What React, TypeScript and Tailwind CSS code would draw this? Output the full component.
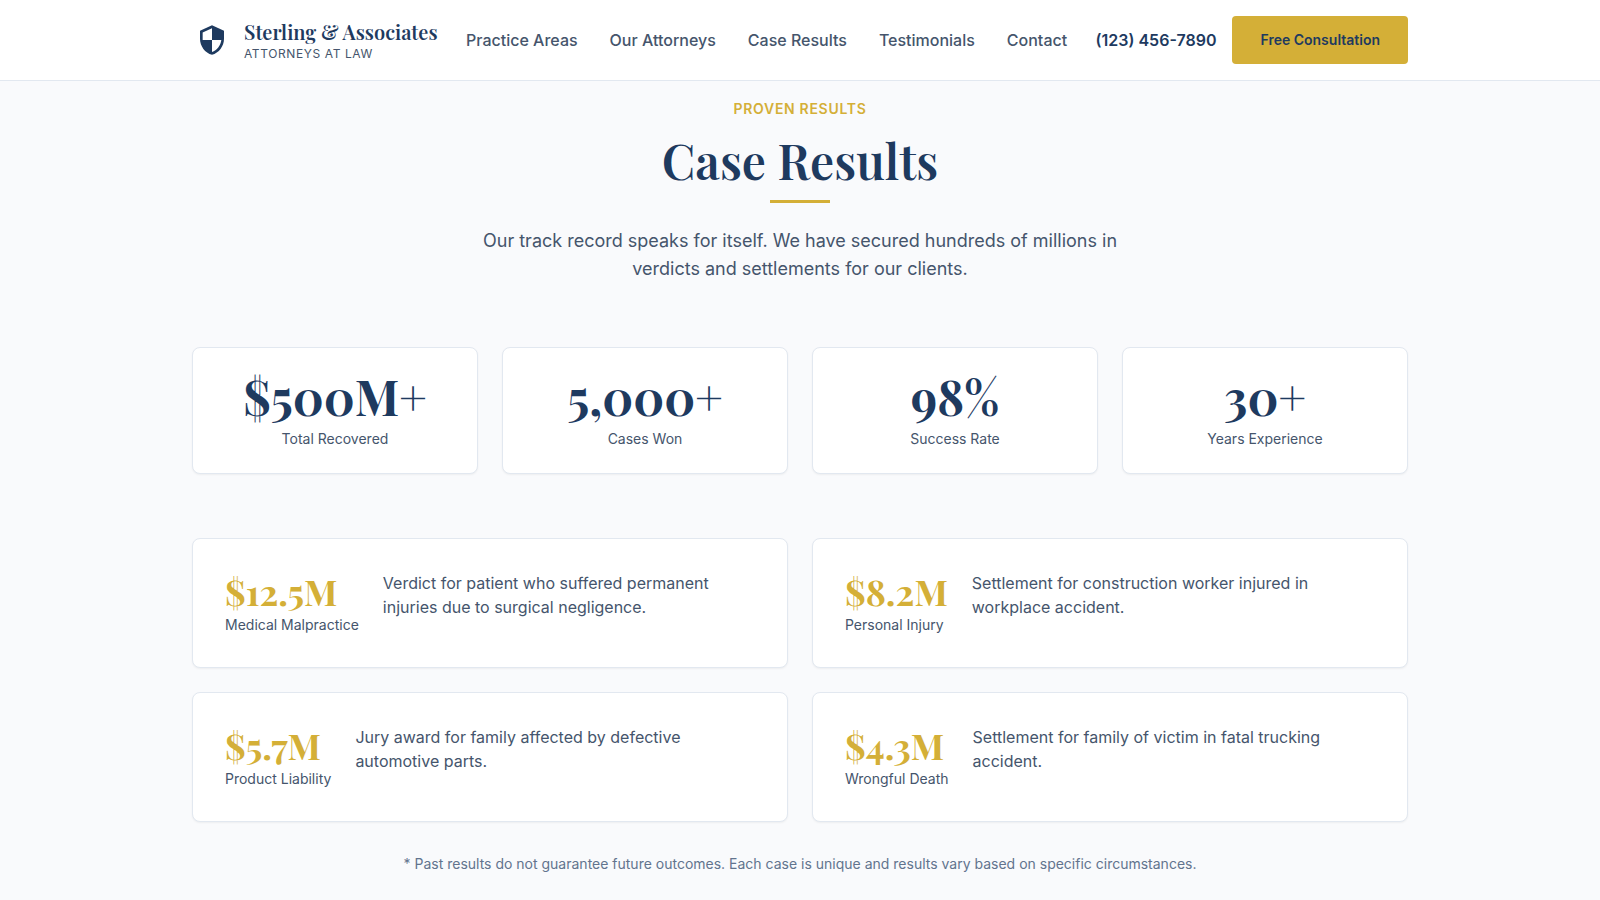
/** Landing page for the firm: sticky header plus the case results section. */

const SERIF = "font-['Playfair_Display','Liberation_Serif',serif]";

const NAV = [
  { label: 'Practice Areas', href: '#practice-areas' },
  { label: 'Our Attorneys', href: '#attorneys' },
  { label: 'Case Results', href: '#results' },
  { label: 'Testimonials', href: '#testimonials' },
  { label: 'Contact', href: '#contact' },
];

const STATS = [
  { value: '$500M+', label: 'Total Recovered' },
  { value: '5,000+', label: 'Cases Won' },
  { value: '98%', label: 'Success Rate' },
  { value: '30+', label: 'Years Experience' },
];

const RESULTS = [
  {
    amount: '$12.5M',
    area: 'Medical Malpractice',
    text: 'Verdict for patient who suffered permanent injuries due to surgical negligence.',
  },
  {
    amount: '$8.2M',
    area: 'Personal Injury',
    text: 'Settlement for construction worker injured in workplace accident.',
  },
  {
    amount: '$5.7M',
    area: 'Product Liability',
    text: 'Jury award for family affected by defective automotive parts.',
  },
  {
    amount: '$4.3M',
    area: 'Wrongful Death',
    text: 'Settlement for family of victim in fatal trucking accident.',
  },
];

function ShieldIcon() {
  return (
    <svg viewBox="0 0 24 24" className="size-8" fill="currentColor" aria-hidden="true">
      <path d="M12 1L3 5v6c0 5.55 3.84 10.74 9 12 5.16-1.26 9-6.45 9-12V5l-9-4zm0 10.99h7c-.53 4.12-3.28 7.79-7 8.94V12H5V6.3l7-3.11v8.8z" />
    </svg>
  );
}

function Header() {
  return (
    <header className="sticky top-0 z-10 border-b border-slate-200 bg-white">
      <div className="mx-auto flex h-20 max-w-7xl items-center justify-between px-8">
        <a href="#home" className="flex items-center gap-3 text-[#1e3a5f]">
          <span className="flex size-10 items-center justify-center">
            <ShieldIcon />
          </span>
          <span className="flex flex-col">
            <span className={`${SERIF} text-xl font-semibold`}>Sterling &amp; Associates</span>
            <span className="text-xs tracking-wider text-slate-600">ATTORNEYS AT LAW</span>
          </span>
        </a>

        <nav className="flex items-center gap-8">
          {NAV.map((item) => (
            <a key={item.href} href={item.href} className="font-medium text-slate-600">
              {item.label}
            </a>
          ))}
        </nav>

        <div className="flex items-center gap-4">
          <a href="tel:1234567890" className="font-semibold text-[#1e3a5f]">
            (123) 456-7890
          </a>
          <button
            type="button"
            className="h-12 rounded bg-[#d4af37] px-7 text-sm font-semibold text-[#1e3a5f]"
          >
            Free Consultation
          </button>
        </div>
      </div>
    </header>
  );
}

function StatCard({ value, label }: { value: string; label: string }) {
  return (
    <div className="flex flex-col-reverse gap-2 rounded-lg border border-slate-200 bg-white p-6 text-center shadow-xs">
      <dt className="text-sm leading-[21px] text-slate-600">{label}</dt>
      <dd className={`${SERIF} text-5xl font-bold text-[#1e3a5f]`}>{value}</dd>
    </div>
  );
}

function ResultCard({ amount, area, text }: { amount: string; area: string; text: string }) {
  return (
    <article className="flex items-start gap-6 rounded-lg border border-slate-200 bg-white p-8 shadow-xs">
      <div className="shrink-0">
        <h3 className={`${SERIF} mb-1 text-4xl font-bold text-[#d4af37]`}>{amount}</h3>
        <p className="text-sm text-slate-600">{area}</p>
      </div>
      <p className="max-w-[360px] text-slate-600">{text}</p>
    </article>
  );
}

export default function App() {
  return (
    <div className="min-h-screen bg-[#f9fafc] font-['Inter',sans-serif] antialiased">
      <Header />
      <main id="results" className="mx-auto max-w-7xl px-8 pt-[18px] pb-6">
        <div className="mx-auto mb-16 flex max-w-2xl flex-col items-center text-center">
          <p className="mb-3 text-sm font-semibold tracking-wider text-[#d4af37]">PROVEN RESULTS</p>
          <h1 className={`${SERIF} text-5xl leading-[58px] font-semibold text-[#1e3a5f]`}>
            Case Results
          </h1>
          <span className="mt-[11px] mb-6 h-[3px] w-15 bg-[#d4af37]" />
          <p className="text-lg leading-7 text-slate-600">
            Our track record speaks for itself. We have secured hundreds of millions in verdicts
            and settlements for our clients.
          </p>
        </div>

        <dl className="mb-16 grid grid-cols-4 gap-6">
          {STATS.map((s) => (
            <StatCard key={s.label} {...s} />
          ))}
        </dl>

        <div className="grid grid-cols-2 gap-6">
          {RESULTS.map((r) => (
            <ResultCard key={r.area} {...r} />
          ))}
        </div>

        <p className="mt-8 text-center text-sm text-slate-500">
          * Past results do not guarantee future outcomes. Each case is unique and results vary
          based on specific circumstances.
        </p>
      </main>
    </div>
  );
}
